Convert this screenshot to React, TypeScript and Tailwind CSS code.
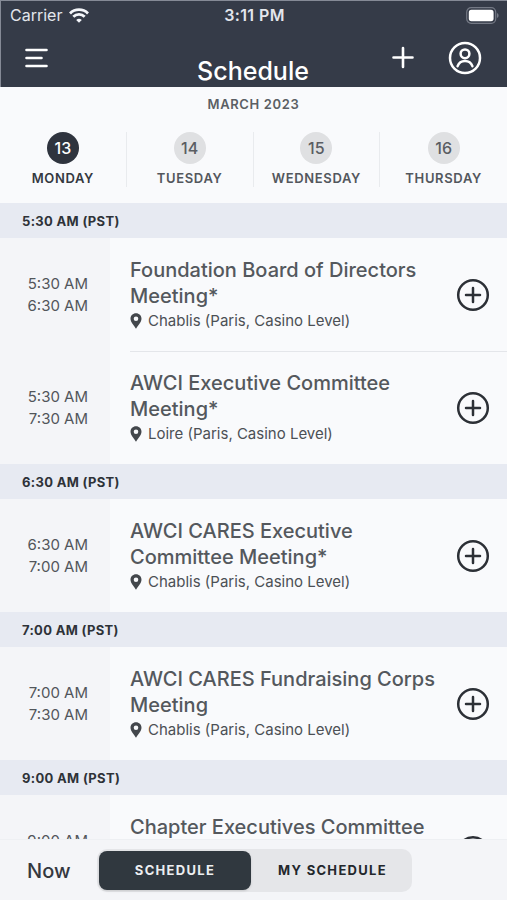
import React from "react";

type Session = { start: string; end: string; title: string; place: string };
type Group = { label: string; sessions: Session[] };

const days = [
  { date: 13, name: "Monday" },
  { date: 14, name: "Tuesday" },
  { date: 15, name: "Wednesday" },
  { date: 16, name: "Thursday" },
];

const chablis = "Chablis (Paris, Casino Level)";

const groups: Group[] = [
  {
    label: "5:30 AM (PST)",
    sessions: [
      { start: "5:30 AM", end: "6:30 AM", title: "Foundation Board of Directors Meeting*", place: chablis },
      { start: "5:30 AM", end: "7:30 AM", title: "AWCI Executive Committee Meeting*", place: "Loire (Paris, Casino Level)" },
    ],
  },
  {
    label: "6:30 AM (PST)",
    sessions: [{ start: "6:30 AM", end: "7:00 AM", title: "AWCI CARES Executive Committee Meeting*", place: chablis }],
  },
  {
    label: "7:00 AM (PST)",
    sessions: [{ start: "7:00 AM", end: "7:30 AM", title: "AWCI CARES Fundraising Corps Meeting", place: chablis }],
  },
  {
    label: "9:00 AM (PST)",
    sessions: [{ start: "9:00 AM", end: "10:00 AM", title: "Chapter Executives Committee Meeting", place: chablis }],
  },
];

function WifiIcon() {
  return (
    <svg width="20" height="15" viewBox="0 0 20 15" fill="none" stroke="#f4f6fa" strokeWidth="2.8" aria-hidden="true">
      <path d="M1 5.4a12.8 12.8 0 0 1 18 0" />
      <path d="M4.3 8.8a8.1 8.1 0 0 1 11.4 0" />
      <path d="M10 14.8 7.2 12a4 4 0 0 1 5.6 0Z" fill="#f4f6fa" stroke="none" />
    </svg>
  );
}

function BatteryIcon() {
  return (
    <svg width="33" height="17" viewBox="0 0 33 17" fill="none" aria-hidden="true">
      <rect x="0.7" y="0.7" width="29" height="15.6" rx="4.5" stroke="#747985" strokeWidth="1.2" />
      <rect x="2.8" y="2.8" width="24.8" height="11.4" rx="2.6" fill="#fff" />
      <path d="M31 6v5c1-.4 1.6-1.3 1.6-2.5S32 6.4 31 6Z" fill="#747985" />
    </svg>
  );
}

function MenuIcon() {
  return (
    <svg width="24" height="20" viewBox="0 0 24 20" stroke="#fff" strokeWidth="2.6" strokeLinecap="round" aria-hidden="true">
      <path d="M2.500 2h20M2.500 10h15M2.500 18h20" />
    </svg>
  );
}

function PlusIcon() {
  return (
    <svg width="24" height="24" viewBox="0 0 24 24" stroke="#fff" strokeWidth="2.6" strokeLinecap="round" aria-hidden="true">
      <path d="M12 2v19M2.500 11.500h19" />
    </svg>
  );
}

function ProfileIcon() {
  return (
    <svg width="34" height="34" viewBox="0 0 34 34" fill="none" stroke="#fff" strokeWidth="2.500" strokeLinecap="round" aria-hidden="true">
      <circle cx="17" cy="17" r="15" />
      <circle cx="17" cy="12.800" r="4.400" />
      <path d="M9.600 25.200c1.200-3.500 3.900-5.200 7.400-5.200s6.200 1.700 7.400 5.200" />
    </svg>
  );
}

function AddIcon() {
  return (
    <svg width="34" height="34" viewBox="0 0 34 34" fill="none" stroke="#2c3036" strokeWidth="2.500" strokeLinecap="round" aria-hidden="true">
      <circle cx="17" cy="17" r="14.800" />
      <path d="M17 10v14M10 17h14" />
    </svg>
  );
}

function PinIcon() {
  return (
    <svg width="12" height="16" viewBox="0 0 12 16" className="shrink-0" aria-hidden="true">
      <path
        fill="#43474c"
        fillRule="evenodd"
        d="M6 .3C2.900.3.5 2.700.5 5.700c0 3.600 4 7.300 5.500 10 1.500-2.700 5.500-6.400 5.500-10C11.500 2.700 9.100.3 6 .3Zm0 3.200a2.300 2.300 0 1 0 0 4.600 2.300 2.300 0 0 0 0-4.600Z"
      />
    </svg>
  );
}

function SessionRow({ session, divided }: { session: Session; divided: boolean }) {
  return (
    <li className="flex">
      <div className="flex w-[110px] shrink-0 flex-col justify-center bg-[#f4f5f8] pr-[22px] text-right text-[15px] leading-[22px] text-[#52565b]">
        <time>{session.start}</time>
        <time>{session.end}</time>
      </div>
      <div
        className={`ml-5 flex min-w-0 flex-1 items-center border-t py-[18px] pr-[17px] ${
          divided ? "border-[#e4e6ea]" : "border-transparent"
        }`}
      >
        <div className="min-w-0 flex-1 pr-3">
          <h3 className="text-xl leading-[26px] font-medium text-[#54585d]">{session.title}</h3>
          <p className="flex items-center gap-[6px] text-[15px] leading-6 text-[#4c5055]">
            <PinIcon />
            {session.place}
          </p>
        </div>
        <button type="button" aria-label={`Add ${session.title}`} className="shrink-0">
          <AddIcon />
        </button>
      </div>
    </li>
  );
}

export default function App() {
  return (
    <div className="flex h-dvh flex-col overflow-hidden bg-[#f9fafc] font-['Inter','Liberation_Sans',sans-serif]">
      <header className="shrink-0 border-t border-l border-[#858a96] bg-[#353b48] text-white">
        <div className="grid h-7 grid-cols-3 items-center pr-2 pl-[9px] text-base text-[#e3e6ec]">
          <div className="flex items-center gap-[7px]">
            Carrier
            <WifiIcon />
          </div>
          <div className="text-center font-semibold tracking-wide">3:11 PM</div>
          <div className="flex justify-end">
            <BatteryIcon />
          </div>
        </div>
        <div className="grid h-[58px] grid-cols-3 items-center pr-[25px] pl-[23px]">
          <button type="button" aria-label="Menu" className="justify-self-start">
            <MenuIcon />
          </button>
          <h1 className="self-end text-center text-[25px] leading-8 font-medium">Schedule</h1>
          <div className="flex items-center justify-end gap-[33px]">
            <button type="button" aria-label="Add">
              <PlusIcon />
            </button>
            <button type="button" aria-label="Profile">
              <ProfileIcon />
            </button>
          </div>
        </div>
      </header>

      <nav aria-label="Days" className="shrink-0 pb-4">
        <p className="py-2 text-center text-[13px] leading-[18px] font-semibold tracking-wider text-[#5b5f64] uppercase">
          March 2023
        </p>
        <div className="grid grid-cols-4 divide-x divide-[#e9ebee] pt-[11px]">
          {days.map((day, i) => (
            <div key={day.date} className="flex justify-center">
              <button
                type="button"
                aria-pressed={i === 0}
                className={`flex flex-col items-center gap-[5px] text-[13px] leading-[18px] font-semibold tracking-wider uppercase ${
                  i === 0 ? "text-[#34383f]" : "text-[#53575d]"
                }`}
              >
                <span
                  className={`grid size-8 shrink-0 place-items-center rounded-full text-base font-medium tracking-normal ${
                    i === 0 ? "bg-[#2f343e] text-white" : "bg-[#dfe0e2] text-[#5a5d62]"
                  }`}
                >
                  {day.date}
                </span>
                {day.name}
              </button>
            </div>
          ))}
        </div>
      </nav>

      <main className="min-h-0 flex-1 overflow-y-auto [scrollbar-width:none]">
        {groups.map((group) => (
          <section key={group.label}>
            <h2 className="bg-[#e7eaf2] px-[22px] pt-[9px] pb-[7px] text-[13px] leading-[19px] font-bold tracking-wide text-[#2e3238]">
              {group.label}
            </h2>
            <ul>
              {group.sessions.map((session, i) => (
                <SessionRow key={session.title} session={session} divided={i > 0} />
              ))}
            </ul>
          </section>
        ))}
      </main>

      <footer className="flex shrink-0 items-center border-t border-[#eef0f3] bg-[#f4f5f8] pt-[9px] pb-2 pl-[27px]">
        <button type="button" className="w-[70px] text-left text-xl font-medium text-[#34383f]">
          Now
        </button>
        <div className="flex h-[43px] w-[315px] rounded-[10px] bg-[#e5e6e9] p-0.5 text-[13px] font-bold tracking-widest">
          <button type="button" aria-pressed="true" className="w-[152px] rounded-lg bg-[#30383f] text-[#eceef1] uppercase shadow-sm">
            Schedule
          </button>
          <button type="button" aria-pressed="false" className="flex-1 pl-1 text-[#23272c] uppercase">
            My Schedule
          </button>
        </div>
      </footer>
    </div>
  );
}
